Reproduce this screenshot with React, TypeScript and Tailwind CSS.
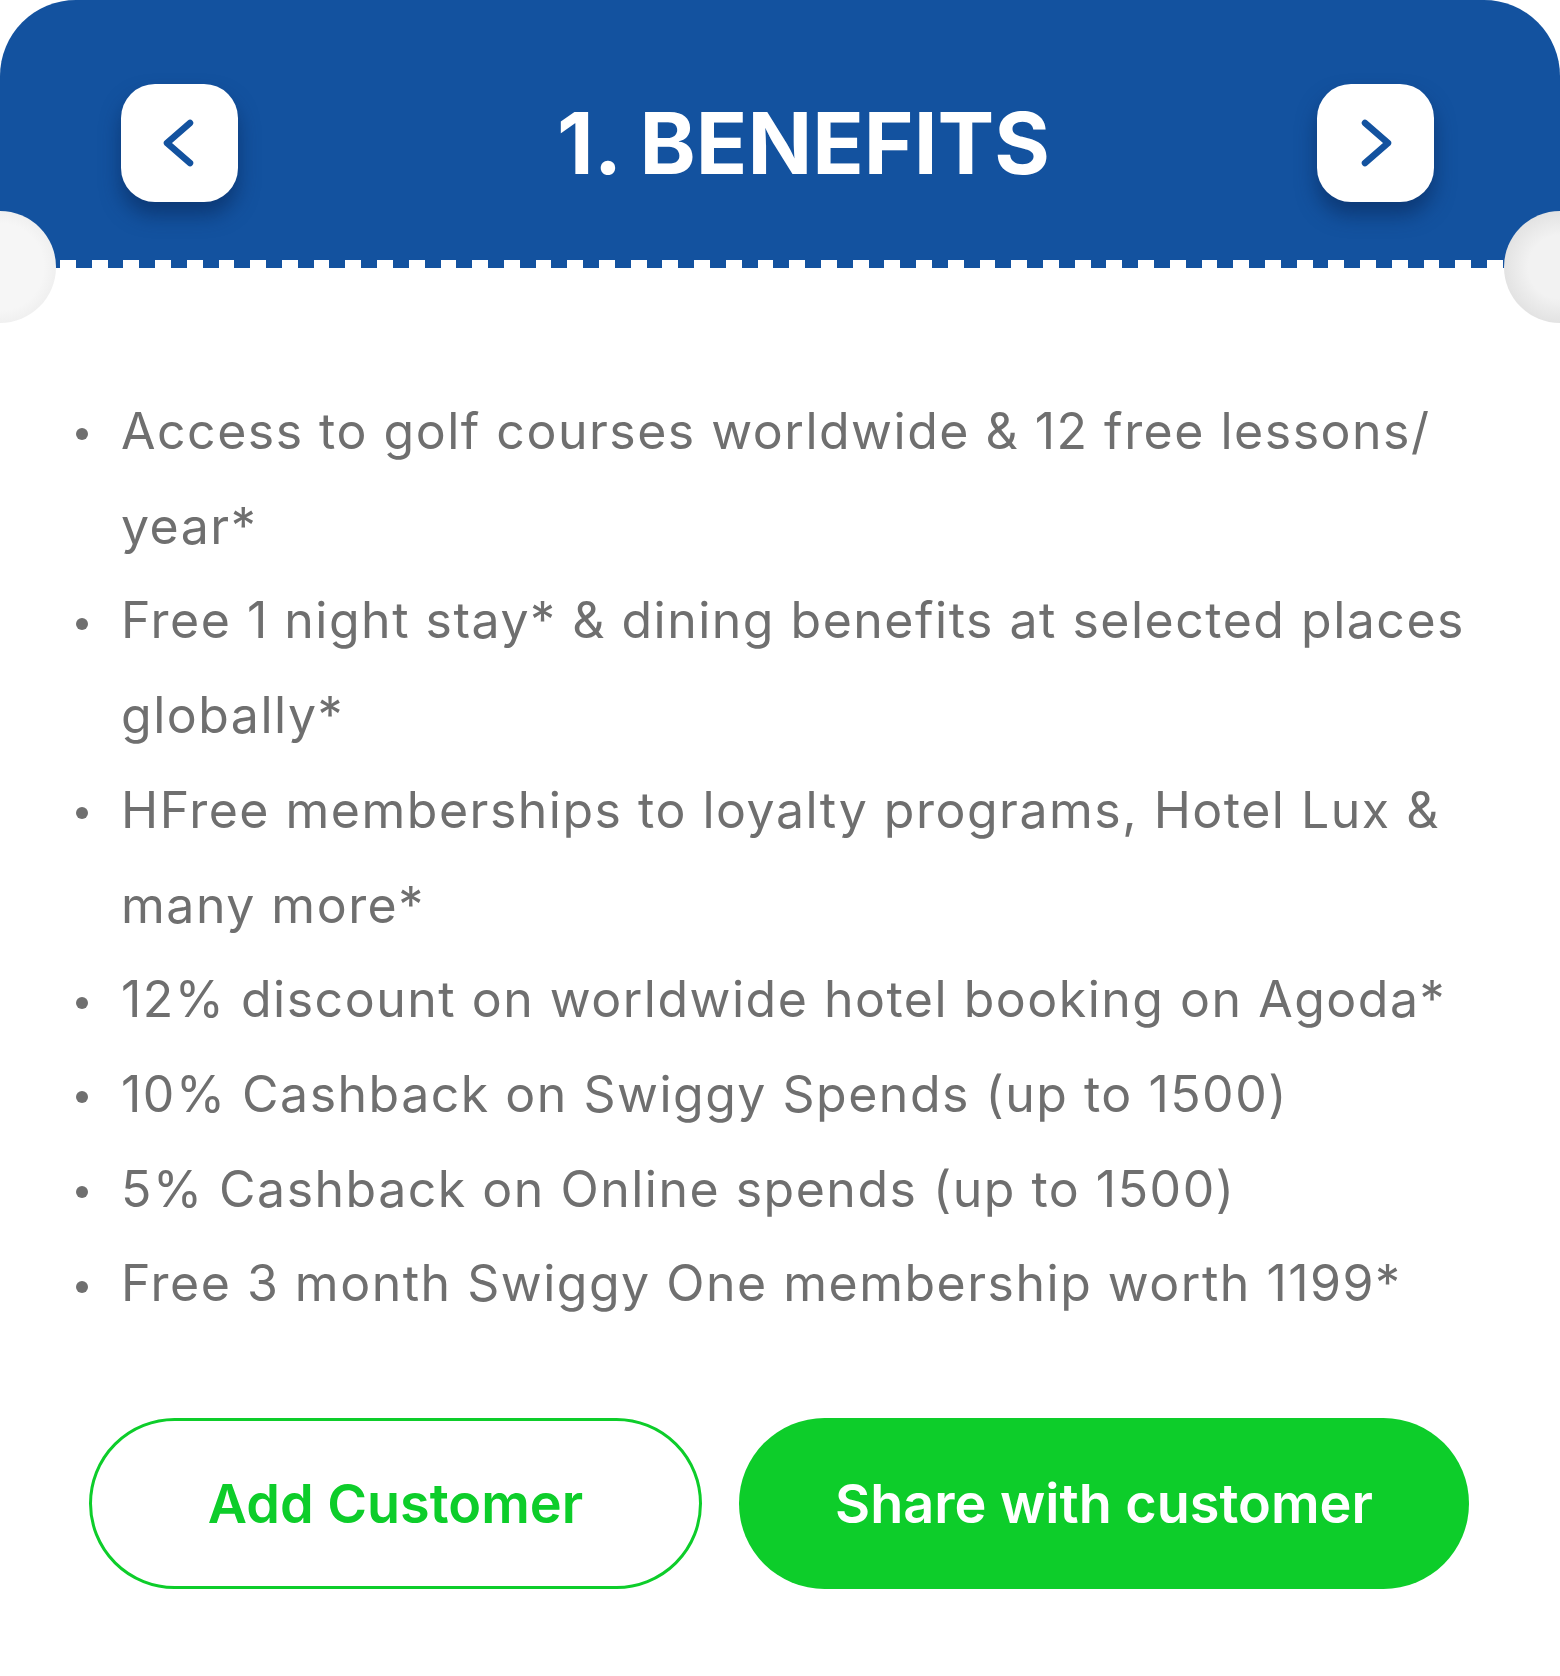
import React from "react";

const lines: string[][] = [
  ["Access to golf courses worldwide & 12 free lessons/", "year*"],
  ["Free 1 night stay* & dining benefits at selected places", "globally*"],
  ["HFree memberships to loyalty programs, Hotel Lux &", "many more*"],
  ["12% discount on worldwide hotel booking on Agoda*"],
  ["10% Cashback on Swiggy Spends (up to 1500)"],
  ["5% Cashback on Online spends (up to 1500)"],
  ["Free 3 month Swiggy One membership worth 1199*"],
];

function Chevron({ dir }: { dir: "left" | "right" }) {
  const d = dir === "left" ? "M69 39 L46 59 L69 79" : "M48 39 L71 59 L48 79";
  return (
    <svg width="117" height="118" viewBox="0 0 117 118" fill="none">
      <path d={d} stroke="#13529f" strokeWidth="6.5" strokeLinecap="round" strokeLinejoin="round" />
    </svg>
  );
}

export default function App() {
  return (
    <div className="relative w-[1560px] h-[1676px] overflow-hidden bg-white font-['Inter',sans-serif]">
      {/* header */}
      <div className="h-[260px] rounded-t-[76px] bg-[#13529f] pt-[26px] pl-[121px] pr-[126px] flex items-center justify-between">
        <button className="w-[117px] h-[118px] rounded-[34px] bg-white flex items-center justify-center shadow-[0_13px_20px_rgba(8,40,90,0.6)]">
          <Chevron dir="left" />
        </button>
        <h1 className="flex-1 pl-[52px] text-center text-white font-bold text-[85px] leading-none tracking-[0px]">
          1. BENEFITS
        </h1>
        <button className="w-[117px] h-[118px] rounded-[34px] bg-white flex items-center justify-center shadow-[0_13px_20px_rgba(8,40,90,0.6)]">
          <Chevron dir="right" />
        </button>
      </div>
      <div className="h-[8px] bg-[repeating-linear-gradient(90deg,transparent_0px,transparent_12.4px,#13529f_12.4px,#13529f_28.3px,transparent_28.3px,transparent_31.71px)]" />

      {/* notches */}
      <div className="absolute left-[-56px] top-[211px] w-[112px] h-[112px] rounded-full bg-[radial-gradient(circle,#f6f6f6_55%,#e4e4e4_100%)]" />
      <div className="absolute right-[-56px] top-[211px] w-[112px] h-[112px] rounded-full bg-[radial-gradient(circle,#f2f2f2_40%,#d4d4d4_100%)]" />

      {/* list */}
      <ul className="mt-[116px] text-[#6f6f6f] text-[50px] tracking-[1.5px] leading-[94.7px]">
        {lines.map((l, i) => (
          <li key={i} className="flex">
            <div className="w-[121px] shrink-0 h-[94.7px] flex items-center justify-end pr-[33px] pt-[6px]">
              <span className="block w-[12px] h-[12px] rounded-full bg-[#6f6f6f]" />
            </div>
            <div className="whitespace-nowrap">
              {l.map((t, j) => (
                <div key={j}>{t}</div>
              ))}
            </div>
          </li>
        ))}
      </ul>

      {/* buttons */}
      <div className="mt-[87px] pl-[89px] flex gap-[37px]">
        <button className="w-[613px] h-[171px] rounded-full border-[3px] border-[#0dcd2a] bg-white text-[#0dcd2a] font-semibold text-[54px]">
          Add Customer
        </button>
        <button className="w-[730px] h-[171px] rounded-full bg-[#0dcd2a] text-white font-semibold text-[54px]">
          Share with customer
        </button>
      </div>
    </div>
  );
}
